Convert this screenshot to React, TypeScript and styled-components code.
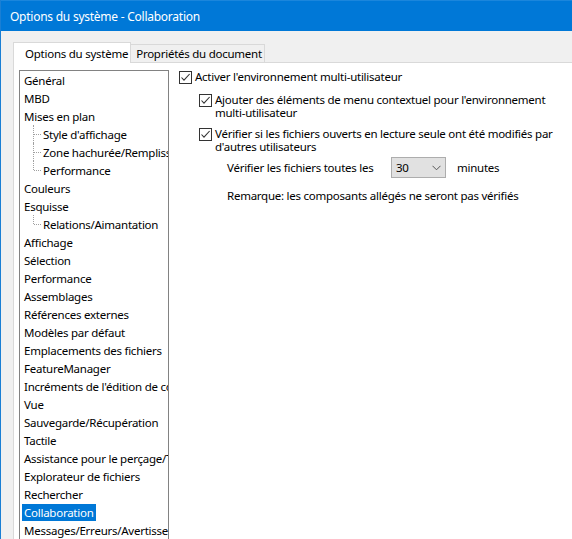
import React from 'react';
import styled, { createGlobalStyle } from 'styled-components';

const GlobalStyle = createGlobalStyle`
	html, body {
		margin: 0;
		padding: 0;
		background: #ffffff;
	}
	body {
		font-family: "Segoe UI", "Noto Sans", "Liberation Sans", sans-serif;
		font-size: 11.5px;
		letter-spacing: -0.25px;
		color: #000000;
	}
`

type TreeItem = {
	label: string;
	level: 0 | 1;
	last?: boolean;
	selected?: boolean;
}

const treeItems: Array<TreeItem> = [
	{ label: 'Général', level: 0 },
	{ label: 'MBD', level: 0 },
	{ label: 'Mises en plan', level: 0 },
	{ label: "Style d'affichage", level: 1 },
	{ label: 'Zone hachurée/Remplissage', level: 1 },
	{ label: 'Performance', level: 1, last: true },
	{ label: 'Couleurs', level: 0 },
	{ label: 'Esquisse', level: 0 },
	{ label: 'Relations/Aimantation', level: 1, last: true },
	{ label: 'Affichage', level: 0 },
	{ label: 'Sélection', level: 0 },
	{ label: 'Performance', level: 0 },
	{ label: 'Assemblages', level: 0 },
	{ label: 'Références externes', level: 0 },
	{ label: 'Modèles par défaut', level: 0 },
	{ label: 'Emplacements des fichiers', level: 0 },
	{ label: 'FeatureManager', level: 0 },
	{ label: "Incréments de l'édition de cotes", level: 0 },
	{ label: 'Vue', level: 0 },
	{ label: 'Sauvegarde/Récupération', level: 0 },
	{ label: 'Tactile', level: 0 },
	{ label: 'Assistance pour le perçage/Toolbox', level: 0 },
	{ label: 'Explorateur de fichiers', level: 0 },
	{ label: 'Rechercher', level: 0 },
	{ label: 'Collaboration', level: 0, selected: true },
	{ label: 'Messages/Erreurs/Avertissements', level: 0 },
]

const CheckMark = () => (
	<svg width="11" height="11" viewBox="0 0 11 11">
		<path d="M1.5 5.5 L4 8.2 L9.6 2" fill="none" stroke="#333333" strokeWidth="1.1" />
	</svg>
)

const Chevron = () => (
	<svg width="9" height="6" viewBox="0 0 9 6">
		<path d="M0.5 0.8 L4.5 4.8 L8.5 0.8" fill="none" stroke="#555555" strokeWidth="1" />
	</svg>
)

const Check = (props: { checked: boolean }) => (
	<StyledCheckBox>{props.checked && <CheckMark />}</StyledCheckBox>
)

export default function App() {
	return (
		<>
			<GlobalStyle />
			<StyledWindow>
				<StyledTitleBar>Options du système - Collaboration</StyledTitleBar>
				<StyledBody>
					<StyledTabStrip>
						<StyledTab active>Options du système</StyledTab>
						<StyledTab>Propriétés du document</StyledTab>
					</StyledTabStrip>
					<StyledPanel>
						<StyledTree>
							{treeItems.map((item, index) => (
								<StyledTreeRow key={index} level={item.level}>
									{item.level === 1 && <StyledConnector last={item.last} />}
									<StyledTreeLabel selected={item.selected}>{item.label}</StyledTreeLabel>
								</StyledTreeRow>
							))}
						</StyledTree>

						<StyledOptions>
							<StyledOption>
								<Check checked />
								<StyledOptionText>Activer l'environnement multi-utilisateur</StyledOptionText>
							</StyledOption>

							<StyledSubOptions>
								<StyledOption>
									<Check checked />
									<StyledOptionText>
										Ajouter des éléments de menu contextuel pour l'environnement
										<br />multi-utilisateur
									</StyledOptionText>
								</StyledOption>

								<StyledOption>
									<Check checked />
									<StyledOptionText>
										Vérifier si les fichiers ouverts en lecture seule ont été modifiés par
										<br />d'autres utilisateurs
									</StyledOptionText>
								</StyledOption>

								<StyledIntervalRow>
									<StyledIntervalLabel>Vérifier les fichiers toutes les</StyledIntervalLabel>
									<StyledSelect>
										<span>30</span>
										<Chevron />
									</StyledSelect>
									<span>minutes</span>
								</StyledIntervalRow>

								<StyledNote>Remarque: les composants allégés ne seront pas vérifiés</StyledNote>
							</StyledSubOptions>
						</StyledOptions>
					</StyledPanel>
				</StyledBody>
			</StyledWindow>
		</>
	);
}

const StyledWindow = styled.div`
	width: 572px;
	height: 539px;
	overflow: hidden;
	background-color: #f0f0f0;
	border-left: 1px solid #1a7fd4;
	box-sizing: border-box;
	display: flex;
	flex-direction: column;
`

const StyledTitleBar = styled.div`
	height: 31px;
	flex-shrink: 0;
	background-color: #0078d7;
	border-top: 1px solid #1b86dc;
	box-sizing: border-box;
	color: #ffffff;
	font-size: 12px;
	padding-left: 9px;
	display: flex;
	align-items: center;
`

const StyledBody = styled.div`
	flex: 1;
	padding: 11px 0 0 12px;
	display: flex;
	flex-direction: column;
	min-height: 0;
`

const StyledTabStrip = styled.div`
	display: flex;
	align-items: flex-end;
	height: 20px;
	flex-shrink: 0;
	position: relative;
	z-index: 1;
`

const StyledTab = styled.div<{ active?: boolean }>`
	box-sizing: border-box;
	height: ${props => props.active ? '21px' : '18px'};
	padding: ${props => props.active ? '0 2px 0 11px' : '0 2px 0 5px'};
	margin-bottom: ${props => props.active ? '-1px' : '0'};
	background-color: ${props => props.active ? '#ffffff' : '#f0f0f0'};
	border: 1px solid #d9d9d9;
	border-bottom: none;
	border-left: ${props => props.active ? '1px solid #d9d9d9' : 'none'};
	display: flex;
	align-items: center;
	white-space: nowrap;
`

const StyledPanel = styled.div`
	flex: 1;
	min-height: 0;
	background-color: #ffffff;
	border: 1px solid #d9d9d9;
	border-right: none;
	border-bottom: none;
	padding: 7px 0 0 5px;
	display: flex;
	gap: 10px;
`

const StyledTree = styled.div`
	width: 150px;
	flex-shrink: 0;
	box-sizing: border-box;
	border: 1px solid #828282;
	border-bottom: none;
	overflow: hidden;
`

const StyledTreeRow = styled.div<{ level: number }>`
	height: 18px;
	display: flex;
	align-items: center;
	padding-left: ${props => props.level === 1 ? '13px' : '2px'};
	white-space: nowrap;
`

const StyledConnector = styled.span<{ last?: boolean }>`
	width: 8px;
	height: 18px;
	position: relative;
	flex-shrink: 0;

	&::before {
		content: '';
		position: absolute;
		left: 0;
		top: 0;
		height: ${props => props.last ? '9px' : '18px'};
		border-left: 1px dotted #a0a0a0;
	}

	&::after {
		content: '';
		position: absolute;
		left: 1px;
		top: 9px;
		width: 7px;
		border-top: 1px dotted #a0a0a0;
	}
`

const StyledTreeLabel = styled.span<{ selected?: boolean }>`
	padding: 1px 2px;
	line-height: 15px;
	background-color: ${props => props.selected ? '#0078d7' : 'transparent'};
	color: ${props => props.selected ? '#ffffff' : '#000000'};
`

const StyledOptions = styled.div`
	display: flex;
	flex-direction: column;
`

const StyledSubOptions = styled.div`
	display: flex;
	flex-direction: column;
	padding-left: 20px;
	padding-top: 1px;
`

const StyledOption = styled.div`
	display: flex;
	align-items: flex-start;
	gap: 3px;
	margin-bottom: 8px;
	white-space: nowrap;
`

const StyledCheckBox = styled.span`
	width: 13px;
	height: 13px;
	box-sizing: border-box;
	border: 1px solid #333333;
	background-color: #ffffff;
	flex-shrink: 0;
	display: flex;
	align-items: center;
	justify-content: center;
	margin-top: 1px;
`

const StyledOptionText = styled.span`
	line-height: 13px;
`

const StyledIntervalRow = styled.div`
	display: flex;
	align-items: center;
	padding-left: 28px;
	margin-top: -4px;
	white-space: nowrap;
`

const StyledIntervalLabel = styled.span`
	width: 164px;
`

const StyledSelect = styled.div`
	width: 55px;
	height: 21px;
	box-sizing: border-box;
	background-color: #e1e1e1;
	border: 1px solid #adadad;
	display: flex;
	align-items: center;
	justify-content: space-between;
	padding: 0 4px 0 4px;
	margin-right: 11px;
`

const StyledNote = styled.div`
	padding-left: 28px;
	margin-top: 11px;
	line-height: 13px;
	white-space: nowrap;
`
